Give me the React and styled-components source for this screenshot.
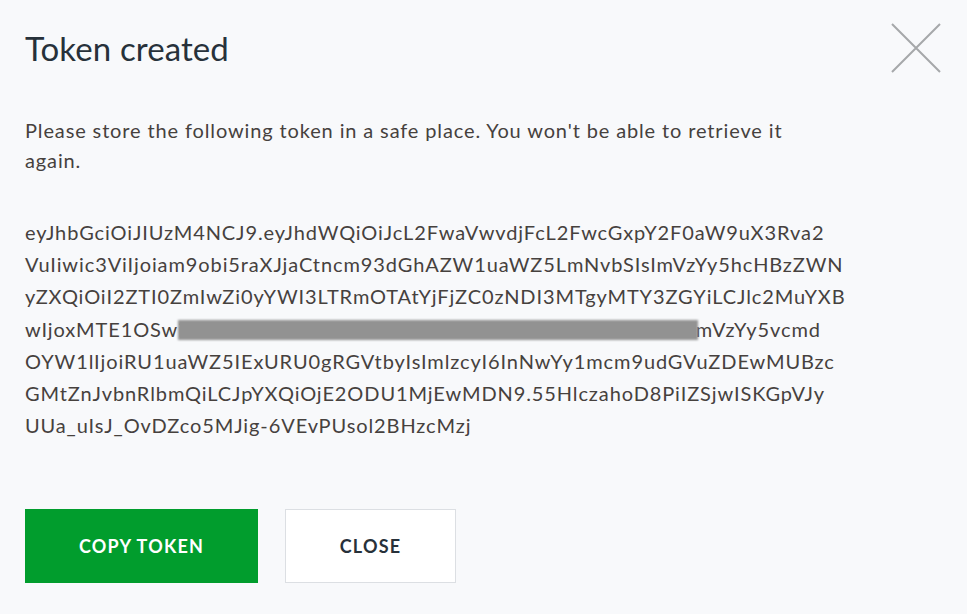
import React from "react";
import styled, { createGlobalStyle } from "styled-components";

const GlobalStyle = createGlobalStyle`
  html, body {
    margin: 0;
    padding: 0;
    background: #f8f9fb;
  }
  body {
    font-family: Lato, "Open Sans", sans-serif;
  }
`;

const tokenLines = [
  ["eyJhbGciOiJIUzM4NCJ9.eyJhdWQiOiJcL2FwaVwvdjFcL2FwcGxpY2F0aW9uX3Rva2"],
  ["VuIiwic3ViIjoiam9obi5raXJjaCtncm93dGhAZW1uaWZ5LmNvbSIsImVzYy5hcHBzZWN"],
  ["yZXQiOiI2ZTI0ZmIwZi0yYWI3LTRmOTAtYjFjZC0zNDI3MTgyMTY3ZGYiLCJlc2MuYXB"],
  ["wIjoxMTE1OSwi", null, "mVzYy5vcmd"],
  ["OYW1lIjoiRU1uaWZ5IExURU0gRGVtbyIsImlzcyI6InNwYy1mcm9udGVuZDEwMUBzc"],
  ["GMtZnJvbnRlbmQiLCJpYXQiOjE2ODU1MjEwMDN9.55HlczahoD8PiIZSjwISKGpVJy"],
  ["UUa_uIsJ_OvDZco5MJig-6VEvPUsol2BHzcMzj"],
];

const App = () => {
  return (
    <>
      <GlobalStyle />
      <Modal>
        <Header>
          <Title>Token created</Title>
          <CloseIcon aria-label="Close">
            <svg width="52" height="52" viewBox="0 0 52 52">
              <path d="M2 2 L50 50 M50 2 L2 50" stroke="#a6a8aa" strokeWidth="2" fill="none" />
            </svg>
          </CloseIcon>
        </Header>
        <Message>
          Please store the following token in a safe place. You won't be able to retrieve it
          <br />
          again.
        </Message>
        <Token>
          {tokenLines.map((line, i) => (
            <TokenLine key={i}>
              {line.length === 3 ? (
                <>
                  {line[0]}
                  <Redacted aria-hidden="true" />
                  {line[2]}
                </>
              ) : (
                line[0]
              )}
            </TokenLine>
          ))}
        </Token>
        <Actions>
          <Button $primary>Copy token</Button>
          <Button>Close</Button>
        </Actions>
      </Modal>
    </>
  );
};

const Modal = styled.div`
  width: 967px;
  height: 614px;
  box-sizing: border-box;
  padding: 0 25px;
  background: #f8f9fb;
  display: flex;
  flex-direction: column;
`;

const Header = styled.div`
  display: flex;
  justify-content: space-between;
  align-items: flex-start;
  height: 98px;
`;

const Title = styled.h1`
  margin: 28px 0 0;
  font-size: 33px;
  font-weight: 400;
  line-height: 40px;
  letter-spacing: 0.1px;
  color: #27313a;
`;

const CloseIcon = styled.button`
  margin: 22px 0 0;
  padding: 0;
  border: none;
  background: none;
  width: 52px;
  height: 52px;
  cursor: pointer;
`;

const Message = styled.p`
  margin: 17px 0 0;
  font-size: 20px;
  line-height: 30px;
  letter-spacing: 0.87px;
  color: #46413e;
`;

const Token = styled.div`
  margin-top: 41px;
  font-size: 20px;
  line-height: 32.2px;
  letter-spacing: 0.9px;
  color: #46413e;
`;

const TokenLine = styled.div`
  white-space: nowrap;
`;

const Redacted = styled.span`
  display: inline-block;
  width: 520px;
  height: 20px;
  margin-left: -6px;
  margin-right: -2px;
  vertical-align: -3px;
  background: #929292;
  filter: blur(1.2px);
`;

const Actions = styled.div`
  display: flex;
  gap: 27px;
  margin-top: 68px;
`;

const Button = styled.button`
  height: 74px;
  width: ${(p) => (p.$primary ? "233px" : "171px")};
  border: 1px solid ${(p) => (p.$primary ? "#019d2d" : "#dcdfe3")};
  background: ${(p) => (p.$primary ? "#019d2d" : "#ffffff")};
  color: ${(p) => (p.$primary ? "#ffffff" : "#27313a")};
  font-family: Lato, "Open Sans", sans-serif;
  font-size: 18px;
  font-weight: 700;
  letter-spacing: 1.2px;
  text-transform: uppercase;
  cursor: pointer;
`;

export default App;
